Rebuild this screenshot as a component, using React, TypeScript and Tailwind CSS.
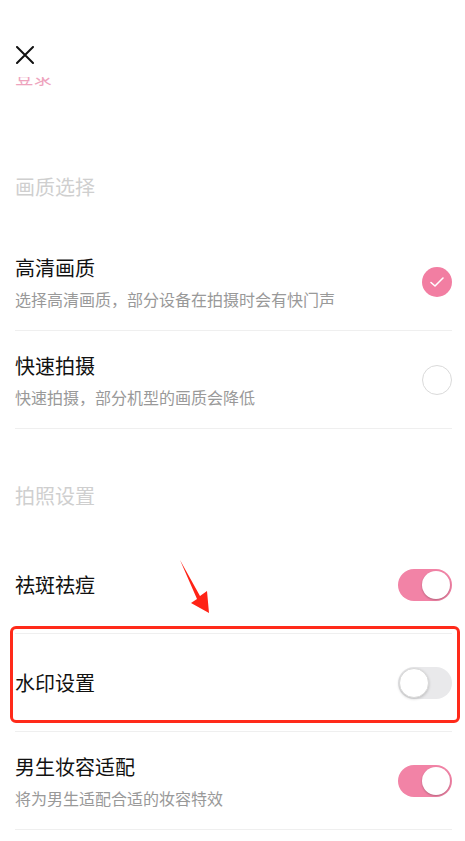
import React from "react";

const font = { fontFamily: '"Noto Sans CJK SC", "Noto Sans", sans-serif' };

function Toggle({ on }: { on: boolean }) {
  return on ? (
    <div className="relative h-[32px] w-[54px] rounded-full bg-[#f283a6] shrink-0">
      <div className="absolute right-[2px] top-[2px] h-[28px] w-[28px] rounded-full bg-white shadow-[0_1px_2px_rgba(0,0,0,0.25)]" />
    </div>
  ) : (
    <div className="relative h-[32px] w-[54px] rounded-full bg-[#e9e9eb] shrink-0">
      <div className="absolute left-[1px] top-[1px] h-[30px] w-[30px] rounded-full bg-white border border-[#d9d9d9] shadow-[0_1px_3px_rgba(0,0,0,0.2)]" />
    </div>
  );
}

function Check({ on }: { on: boolean }) {
  return on ? (
    <div className="flex h-[30px] w-[30px] items-center justify-center rounded-full bg-[#f27ea2] shrink-0">
      <svg width="16" height="12" viewBox="0 0 16 12" fill="none">
        <path d="M2 6.5 L6 10 L14 2" stroke="white" strokeWidth="1.6" strokeLinecap="round" strokeLinejoin="round" />
      </svg>
    </div>
  ) : (
    <div className="h-[30px] w-[30px] rounded-full border-[1.5px] border-[#dadada] shrink-0" />
  );
}

function Row2({ title, sub, right }: { title: string; sub: string; right: React.ReactNode }) {
  return (
    <div className="flex items-center justify-between border-b border-[#efefef] pt-[21px] pb-[20px]">
      <div className="flex flex-col">
        <div className="text-[20px] leading-[28px] text-[#111]">{title}</div>
        <div className="mt-[6px] text-[16px] leading-[22px] text-[#999]">{sub}</div>
      </div>
      {right}
    </div>
  );
}

function Row1({ title, right }: { title: string; right: React.ReactNode }) {
  return (
    <div className="flex h-[98px] items-center justify-between border-b border-[#efefef]">
      <div className="text-[20px] leading-[28px] text-[#111]">{title}</div>
      {right}
    </div>
  );
}

export default function App() {
  return (
    <div className="relative min-h-[841px] w-[465px] overflow-hidden bg-white" style={font}>
      <div className="ml-[15px] mr-[13px] flex flex-col">
        <div className="pt-[46px] pl-[1px]">
          <svg width="18" height="18" viewBox="0 0 18 18">
            <path d="M1 1 L17 17 M17 1 L1 17" stroke="#111" strokeWidth="2" strokeLinecap="round" />
          </svg>
        </div>
        <div className="mt-[13px] h-[9px] overflow-hidden">
          <div className="-mt-[12px] text-[18.5px] leading-[22px] text-[#eea3bd]">登录</div>
        </div>
        <div className="mt-[87px] text-[20px] leading-[28px] text-[#cfcfcf]">画质选择</div>
        <div className="mt-[32px]">
          <Row2 title="高清画质" sub="选择高清画质，部分设备在拍摄时会有快门声" right={<Check on />} />
          <Row2 title="快速拍摄" sub="快速拍摄，部分机型的画质会降低" right={<Check on={false} />} />
        </div>
        <div className="mt-[53px] text-[20px] leading-[28px] text-[#cfcfcf]">拍照设置</div>
        <div className="mt-[26px]">
          <Row1 title="祛斑祛痘" right={<Toggle on />} />
          <Row1 title="水印设置" right={<Toggle on={false} />} />
          <Row2 title="男生妆容适配" sub="将为男生适配合适的妆容特效" right={<Toggle on />} />
        </div>
      </div>

      {/* annotation box */}
      <div className="pointer-events-none absolute left-[10px] top-[626px] h-[97px] w-[450px] rounded-[6px] border-[3px] border-[#ff2a1a]" />
      {/* annotation arrow */}
      <svg className="pointer-events-none absolute left-0 top-0" width="465" height="841">
        <polygon points="180,560 200,596 207,591 209,613 191,603 197,599" fill="#ff2316" />
      </svg>
    </div>
  );
}
